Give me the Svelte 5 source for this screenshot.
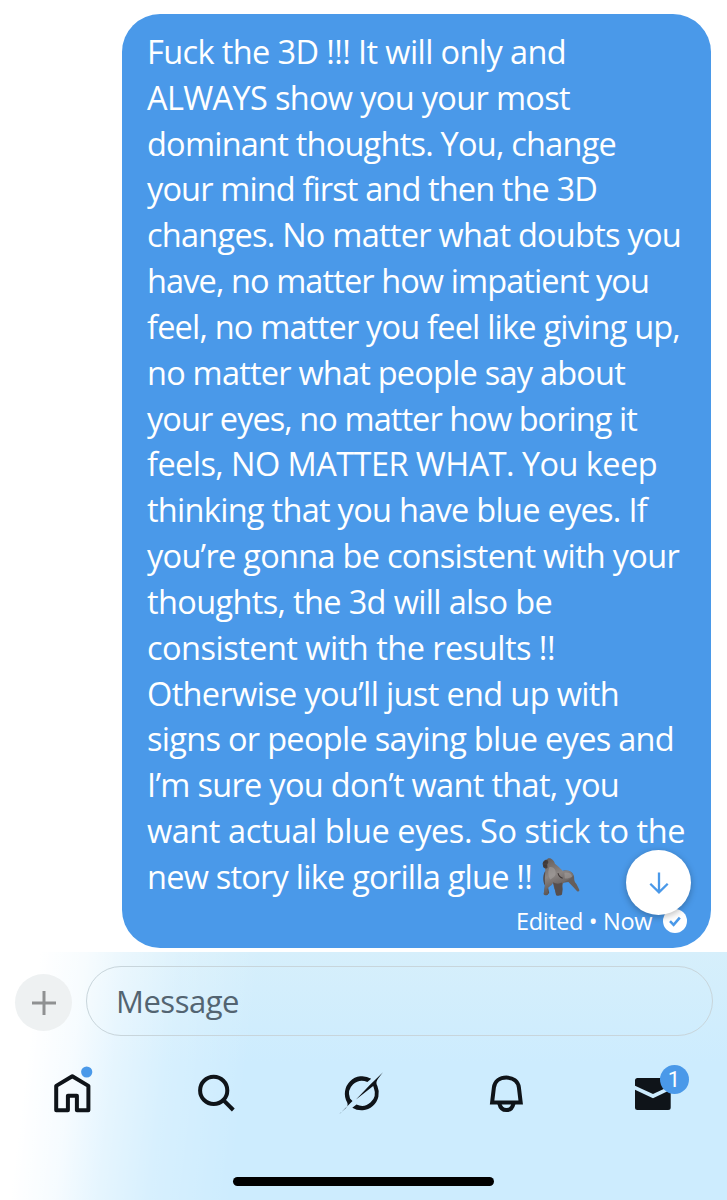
<script lang="ts">
  const lines = [
    { text: "Fuck the 3D !!! It will only and", width: 419 },
    { text: "ALWAYS show you your most", width: 423 },
    { text: "dominant thoughts. You, change", width: 469 },
    { text: "your mind first and then the 3D", width: 450 },
    { text: "changes. No matter what doubts you", width: 534 },
    { text: "have, no matter how impatient you", width: 502 },
    { text: "feel, no matter you feel like giving up,", width: 533 },
    { text: "no matter what people say about", width: 478 },
    { text: "your eyes, no matter how boring it", width: 490 },
    { text: "feels, NO MATTER WHAT. You keep", width: 510 },
    { text: "thinking that you have blue eyes. If", width: 500 },
    { text: "you’re gonna be consistent with your", width: 532 },
    { text: "thoughts, the 3d will also be", width: 405 },
    { text: "consistent with the results !!", width: 408 },
    { text: "Otherwise you’ll just end up with", width: 472 },
    { text: "signs or people saying blue eyes and", width: 527 },
    { text: "I’m sure you don’t want that, you", width: 472 },
    { text: "want actual blue eyes. So stick to the", width: 538 },
    { text: "new story like gorilla glue !!", width: 385 },
  ];

  // spread the letters so the run is as wide as asked
  function fit(node: HTMLElement, width: number) {
    const natural = node.getBoundingClientRect().width;
    const count = node.textContent?.length ?? 1;
    node.style.letterSpacing = `${(width - natural) / count}px`;
  }
</script>

<div class="screen">
  <main class="thread">
    <div class="bubble">
      {#each lines as line, i}
        <div class="line">
          <span use:fit={line.width}>{line.text}</span>
          {#if i === lines.length - 1}
            <svg class="gorilla" viewBox="0 0 112 113" role="img" aria-label="gorilla">
              <defs>
                <linearGradient id="fur" x1="0" y1="0" x2="0.3" y2="1">
                  <stop offset="0" stop-color="#625a57" />
                  <stop offset="0.5" stop-color="#8b8583" />
                  <stop offset="1" stop-color="#564e4c" />
                </linearGradient>
              </defs>
              <path fill="#655e5c" d="M62 38C82 34 94 44 95 58c0 8 1 13 7 19l8 17c2 5-2 7-6 5L91 85 78 71 58 74z" />
              <path fill="#554d4c" d="M9 39C2 51 1 68 8 82l-2 19c-1 6 4 9 9 8l6-5-5-24 8-28z" />
              <path fill="url(#fur)" d="M9 35C7 24 7 8 16 2 26-2 35 7 38 17c9 6 16 15 24 22 14-5 27 0 31 13-7 9-14 14-24 17-8 5-11 13-10 22l-1 17c-2 4-15 5-17 1l-3-13c-5-10-3-15-6-21-7 11-15 10-16 19l2 12c-1 6-12 6-14 1L8 89c1-11 0-18 0-29 0-9 2-16 1-25z" />
              <path fill="#564e4d" d="M32 72c8 5 19 6 27 1l2 20-2 15c-2 4-15 5-17 1l-3-13z" />
              <path fill="#453e3d" d="M2 20c-2-5 3-14 9-15 5-1 8 4 7 9l-3 5 1 9c-2 5-11 4-13-1z" />
              <path fill="#aaa5a3" d="M22 27c11-3 20 7 18 20-1 9-9 13-16 17-6-7-8-28-2-37zM66 44c12-3 21 2 23 11-7 5-14 7-22 6z" opacity="0.5" />
              <path fill="none" stroke="#3d3534" stroke-width="3" d="M4 13l8-2M5 23l8 1M47 45c2 8 7 13 14 15" />
            </svg>
          {/if}
        </div>
      {/each}
      <div class="meta">
        <span use:fit={136}>Edited • Now</span>
        <svg width="24" height="24" viewBox="0 0 24 24">
          <circle cx="12" cy="12" r="12" fill="#fff" />
          <path d="M7 12.2l3.6 3.6 6.2-7.2" fill="none" stroke="#4a99e9" stroke-width="2.6" />
        </svg>
      </div>
      <button class="jump" aria-label="Jump to latest">
        <svg width="24" height="24" viewBox="0 0 24 24" fill="none" stroke="#4a99e9" stroke-width="2.3">
          <path d="M12 1.5v20M3.3 12.7l8.7 8.7 8.7-8.7" />
        </svg>
      </button>
    </div>
  </main>

  <footer>
    <div class="composer">
      <button class="add" aria-label="Add">
        <svg width="26" height="26" viewBox="0 0 26 26" stroke="#8f9192" stroke-width="3">
          <path d="M13 1v24M1 13h24" />
        </svg>
      </button>
      <div class="field"><span use:fit={123}>Message</span></div>
    </div>

    <nav>
      <div class="tab">
        <svg viewBox="0 0 64 64" fill="none" stroke="#0f1419" stroke-width="4" stroke-linejoin="round">
          <path d="M16.2 24.9L32.3 15.2l16.1 9.7v24.3H36.9V34.7h-9v14.5H16.2z" />
          <circle cx="46.7" cy="11" r="5.6" fill="#4a99e9" stroke="none" />
        </svg>
      </div>
      <div class="tab">
        <svg viewBox="0 0 64 64" fill="none" stroke="#0f1419" stroke-width="4">
          <circle cx="28.7" cy="29.4" r="13.6" />
          <path d="M38.4 39.1l9.9 9.9" />
        </svg>
      </div>
      <div class="tab">
        <svg viewBox="0 0 64 64" fill="#0f1419">
          <path d="M9 53.4C14 48 19.4 46 17.1 41.2A17.4 17.4 0 0 1 41.2 17.7L37.4 21A12.9 12.9 0 0 0 20 37.4L22.5 40z" />
          <path d="M53 11.3C47.2 19 45 20.5 47.4 25A17.4 17.4 0 0 1 22.3 46.7l4.2-3.1A12.9 12.9 0 0 0 44 27.4l-.8-2.4L26 38.5l13.8-14.6z" />
        </svg>
      </div>
      <div class="tab">
        <svg viewBox="0 0 64 64" fill="none" stroke="#0f1419" stroke-width="4">
          <path d="M17.1 41.6l1.8-15C19.7 20 25 16.6 31.4 16.6S43.1 20 43.9 26.6l1.8 15z" />
          <path d="M24.3 42.5c1 4.4 3.7 6.6 7.1 6.6s6.1-2.2 7.1-6.6" />
        </svg>
      </div>
      <div class="tab">
        <svg viewBox="0 0 64 64" fill="#0f1419">
          <path d="M17.5 17h30.7a2.5 2.5 0 0 1 2.5 2.5v5.3L33 33l-18-8.2v-5.3a2.5 2.5 0 0 1 2.5-2.5z" />
          <path d="M15 28.8l18 8.5 17.7-8.5v17.7a2.5 2.5 0 0 1-2.5 2.5H17.5a2.5 2.5 0 0 1-2.5-2.5z" />
        </svg>
        <span class="badge">1</span>
      </div>
    </nav>
    <div class="home-bar"></div>
  </footer>
</div>

<style>
  :global(body) { background: #fff; }
  .screen {
    width: 727px; height: 1200px; overflow: hidden;
    display: flex; flex-direction: column;
    font-family: "Open Sans", sans-serif;
  }
  button { border: 0; padding: 0; display: flex; align-items: center; justify-content: center; }
  .thread { height: 952px; box-sizing: border-box; padding: 14px 16px 0 122px; }
  .bubble {
    position: relative; height: 934px; box-sizing: border-box;
    padding: 15px 0 0 25px;
    border-radius: 38px;
    background: #4a99e9; color: #fff;
  }
  .line {
    display: flex; align-items: center;
    height: 45.84px; line-height: 45.84px;
    font-size: 32.5px; white-space: nowrap;
  }
  .gorilla { width: 38px; height: 38px; margin-left: 10px; }
  .meta {
    display: flex; align-items: center; gap: 11px;
    margin: 9px 24px 0 0; height: 24px; justify-content: flex-end;
    font-size: 23.5px; line-height: 24px; white-space: nowrap;
  }
  .jump {
    position: absolute; right: 20px; bottom: 33px;
    width: 65px; height: 65px; border-radius: 50%;
    background: #fff; box-shadow: 0 2px 7px rgba(0,0,0,0.28);
  }
  footer {
    height: 248px; box-sizing: border-box; padding-top: 14px;
    display: flex; flex-direction: column;
    background:
      linear-gradient(97deg, #fff 0, #fff 40px, rgba(255,255,255,0.82) 85px, rgba(255,255,255,0.5) 125px, rgba(255,255,255,0.2) 180px, rgba(255,255,255,0) 260px),
      linear-gradient(#d6effb 0, #cdecfe 110px);
  }
  .composer { display: flex; gap: 14px; padding: 0 14px 0 15px; height: 70px; }
  .add { flex: none; width: 57px; height: 57px; margin-top: 8px; border-radius: 50%; background: #eef1f2; }
  .field {
    flex: 1; box-sizing: border-box; padding-left: 29px;
    display: flex; align-items: center;
    border: 1.5px solid #c8d5db; border-radius: 35px;
    font-size: 31px; color: #536471;
  }
  nav { display: grid; grid-template-columns: repeat(5, 145px); margin: 25px 0 0 -0.5px; }
  .tab { position: relative; display: flex; justify-content: center; }
  .tab svg { width: 64px; height: 64px; overflow: visible; }
  .badge {
    position: absolute; left: 80px; top: 4px;
    width: 29px; height: 29px; border-radius: 50%;
    background: #4a99e9; color: #fff;
    font-family: Roboto, sans-serif; font-size: 22px; line-height: 30px; text-align: center;
  }
  .home-bar { width: 261px; height: 9px; margin: 52px 0 0 233px; border-radius: 5px; background: #000; }
</style>
